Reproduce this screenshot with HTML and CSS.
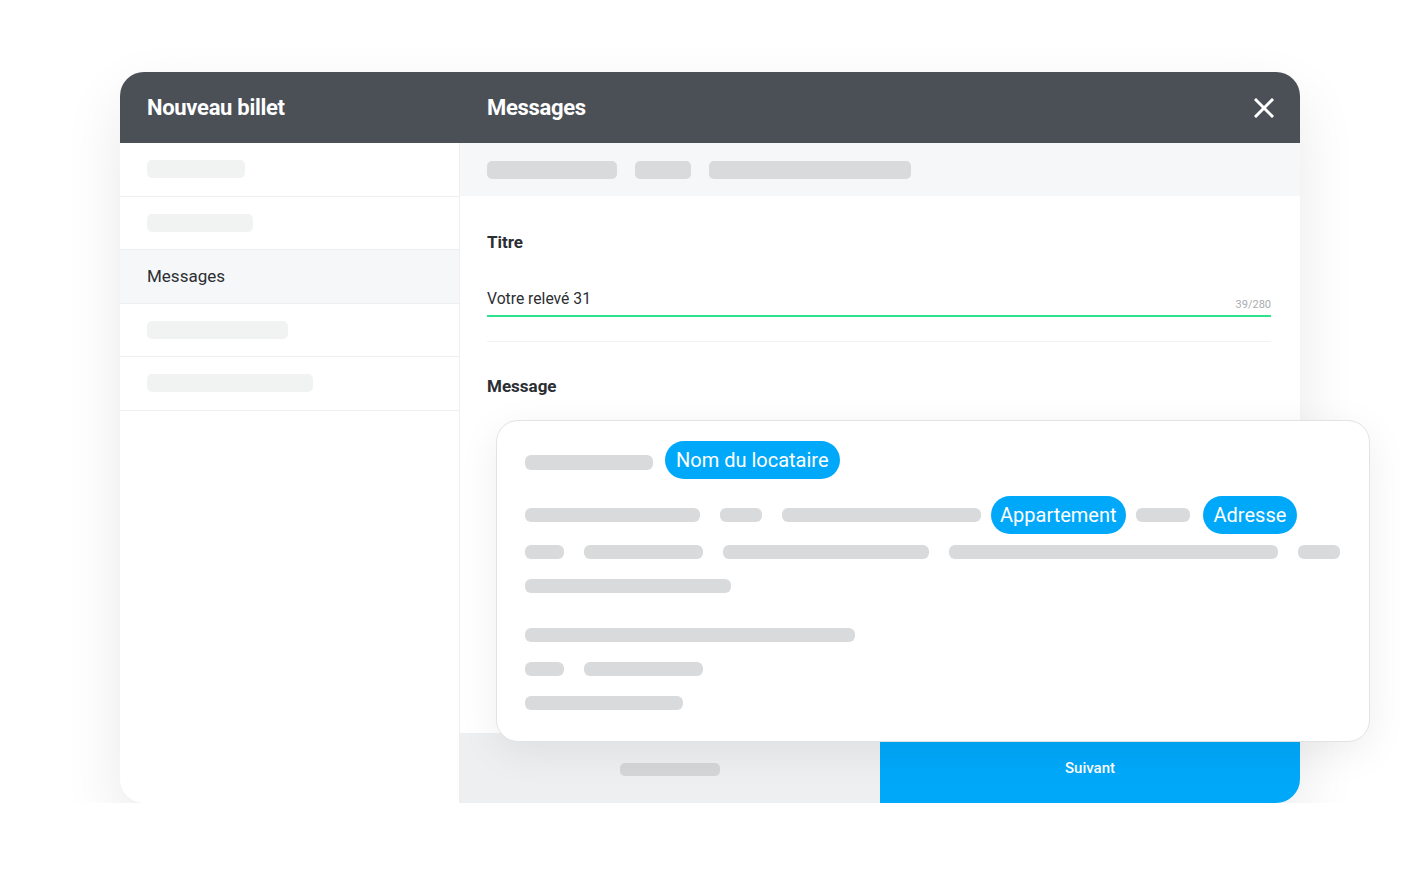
FILE: index.html
```html
<!DOCTYPE html>
<html lang="fr">
<head>
  <meta charset="UTF-8" />
  <meta name="viewport" content="width=device-width, initial-scale=1" />
  <title>Nouveau billet</title>
  <link rel="stylesheet" href="styles.css">
</head>
<body>
  <div class="window">
    <header class="window-header">
      <h1 class="header-title">Nouveau billet</h1>
      <div class="header-main">
        <h2 class="header-title">Messages</h2>
        <button class="close-btn" aria-label="Fermer">
          <svg width="20" height="20" viewBox="0 0 20 20">
            <path d="M2 2 L18 18 M18 2 L2 18" stroke="#fff" stroke-width="3" stroke-linecap="square" fill="none" />
          </svg>
        </button>
      </div>
    </header>

    <div class="window-body">
      <nav class="sidebar">
        <div class="side-row"><span class="bar bar-light" style="width: 98px"></span></div>
        <div class="side-row"><span class="bar bar-light" style="width: 106px"></span></div>
        <div class="side-row active">Messages</div>
        <div class="side-row"><span class="bar bar-light" style="width: 141px"></span></div>
        <div class="side-row"><span class="bar bar-light" style="width: 166px"></span></div>
      </nav>

      <main class="main">
        <div class="toolbar">
          <span class="bar" style="width: 130px"></span>
          <span class="bar" style="width: 56px"></span>
          <span class="bar" style="width: 202px"></span>
        </div>

        <div class="form">
          <label class="field-label" for="titre">Titre</label>
          <div class="input-row">
            <input id="titre" class="title-input" type="text" value="Votre relevé 31" />
            <span class="counter">39/280</span>
          </div>
          <hr class="divider" />
          <div class="field-label">Message</div>
        </div>

        <div class="footer">
          <div class="footer-back"><span class="bar bar-footer" style="width: 100px"></span></div>
          <button class="next-btn">Suivant</button>
        </div>
      </main>
    </div>

    <div class="message-card">
      <div class="line line-first">
        <span class="bar" style="width: 128px"></span>
        <span class="chip">Nom du locataire</span>
      </div>
      <div class="line line-chips">
        <span class="bar" style="width: 175px"></span>
        <span class="bar gap-l" style="width: 42px"></span>
        <span class="bar gap-l" style="width: 199px"></span>
        <span class="chip chip-tight">Appartement</span>
        <span class="bar" style="width: 54px"></span>
        <span class="chip gap-m">Adresse</span>
      </div>
      <div class="line line-tight">
        <span class="bar" style="width: 39px"></span>
        <span class="bar gap-l" style="width: 119px"></span>
        <span class="bar gap-l" style="width: 206px"></span>
        <span class="bar gap-l" style="width: 329px"></span>
        <span class="bar gap-l" style="width: 42px"></span>
      </div>
      <div class="line">
        <span class="bar" style="width: 206px"></span>
      </div>
      <div class="line line-para">
        <span class="bar" style="width: 330px"></span>
      </div>
      <div class="line">
        <span class="bar" style="width: 39px"></span>
        <span class="bar gap-l" style="width: 119px"></span>
      </div>
      <div class="line">
        <span class="bar" style="width: 158px"></span>
      </div>
    </div>
  </div>
</body>
</html>
```

FILE: styles.css
```css
* {
  box-sizing: border-box;
}
body {
  margin: 0;
  background: #fff;
  font-family: Roboto, 'Noto Sans', sans-serif;
  color: #2b2e33;
}
.window {
  position: relative;
  width: 1180px;
  height: 731px;
  margin: 72px 0 0 120px;
  background: #fff;
  border-radius: 24px;
  box-shadow: 0 24px 60px rgba(0, 0, 0, 0.09);
  display: flex;
  flex-direction: column;
}
.window-header {
  height: 71px;
  flex: none;
  background: #4b4f56;
  border-radius: 24px 24px 0 0;
  display: grid;
  grid-template-columns: 340px 1fr;
  align-items: center;
}
.header-title {
  margin: 0 0 1px;
  padding-left: 27px;
  font-size: 22px;
  font-weight: 700;
  color: #fff;
  letter-spacing: -0.3px;
}
.header-main {
  display: flex;
  align-items: center;
  justify-content: space-between;
  padding-right: 26px;
}
.close-btn {
  background: none;
  border: none;
  padding: 0;
  width: 20px;
  height: 20px;
  cursor: pointer;
  display: flex;
}
.window-body {
  flex: 1;
  display: flex;
  min-height: 0;
}
.sidebar {
  width: 340px;
  flex: none;
  border-right: 1px solid #efefef;
  border-radius: 0 0 0 24px;
  align-self: stretch;
}
.side-row {
  height: 53.5px;
  padding-left: 27px;
  display: flex;
  align-items: center;
  border-bottom: 1px solid #eeeff0;
  font-size: 17px;
  color: #2b2e33;
  background: #fff;
}
.side-row.active {
  background: #f6f7f8;
}
.bar {
  display: inline-block;
  height: 18px;
  border-radius: 5px;
  background: #d9dadc;
  flex: none;
}
.bar-light {
  background: #f1f2f2;
}
.main {
  flex: 1;
  display: flex;
  flex-direction: column;
}
.toolbar {
  height: 53px;
  flex: none;
  background: #f6f7f8;
  display: flex;
  align-items: center;
  gap: 18px;
  padding-left: 27px;
}
.form {
  flex: 1;
  padding: 36px 29px 0 27px;
}
.field-label {
  display: block;
  font-size: 17px;
  line-height: 20px;
  font-weight: 700;
  color: #2b2e33;
}
.input-row {
  margin-top: 36px;
  display: flex;
  align-items: flex-end;
  border-bottom: 2px solid #2ee38b;
  padding-bottom: 5px;
}
.title-input {
  flex: 1;
  border: none;
  outline: none;
  padding: 0;
  font-family: inherit;
  font-size: 15.7px;
  line-height: 22px;
  color: #2b2e33;
  background: transparent;
}
.counter {
  font-size: 11px;
  color: #a9acb0;
  line-height: 14px;
  margin-bottom: -2px;
}
.divider {
  margin: 24px 0 34px;
  border: none;
  border-top: 1px solid #f2f2f3;
}
.footer {
  height: 70px;
  flex: none;
  display: grid;
  grid-template-columns: 1fr 1fr;
}
.footer-back {
  background: #eeeff0;
  display: flex;
  align-items: center;
  justify-content: center;
}
.bar-footer {
  height: 13px;
  background: #d5d6d8;
  margin-top: 2px;
}
.next-btn {
  border: none;
  background: #00a8fa;
  color: #fff;
  font-family: inherit;
  font-size: 15px;
  font-weight: 500;
  border-radius: 0 0 24px 0;
  cursor: pointer;
}
.message-card {
  position: absolute;
  left: 376px;
  top: 348px;
  width: 874px;
  height: 322px;
  background: #fff;
  border: 1px solid #e2e3e4;
  border-radius: 22px;
  box-shadow: 0 10px 40px rgba(0, 0, 0, 0.07);
  padding: 20px 20px 0 28px;
}
.line {
  display: flex;
  align-items: center;
  gap: 10px;
  margin-top: 20px;
}
.line .bar {
  height: 14px;
  border-radius: 6px;
}
.line-first {
  margin-top: 0;
  gap: 12px;
}
.line-first .bar {
  margin-top: 5px;
  height: 15px;
}
.line-chips {
  margin-top: 17px;
}
.line-tight {
  margin-top: 11px;
}
.line-para {
  margin-top: 35px;
}
.gap-l {
  margin-left: 10px;
}
.gap-m {
  margin-left: 3px;
}
.chip {
  height: 38px;
  padding: 0 11px;
  border-radius: 19px;
  background: #00a8fa;
  color: #fff;
  font-size: 20px;
  display: flex;
  align-items: center;
  flex: none;
}
.chip-tight {
  padding: 0 9px;
}
```
